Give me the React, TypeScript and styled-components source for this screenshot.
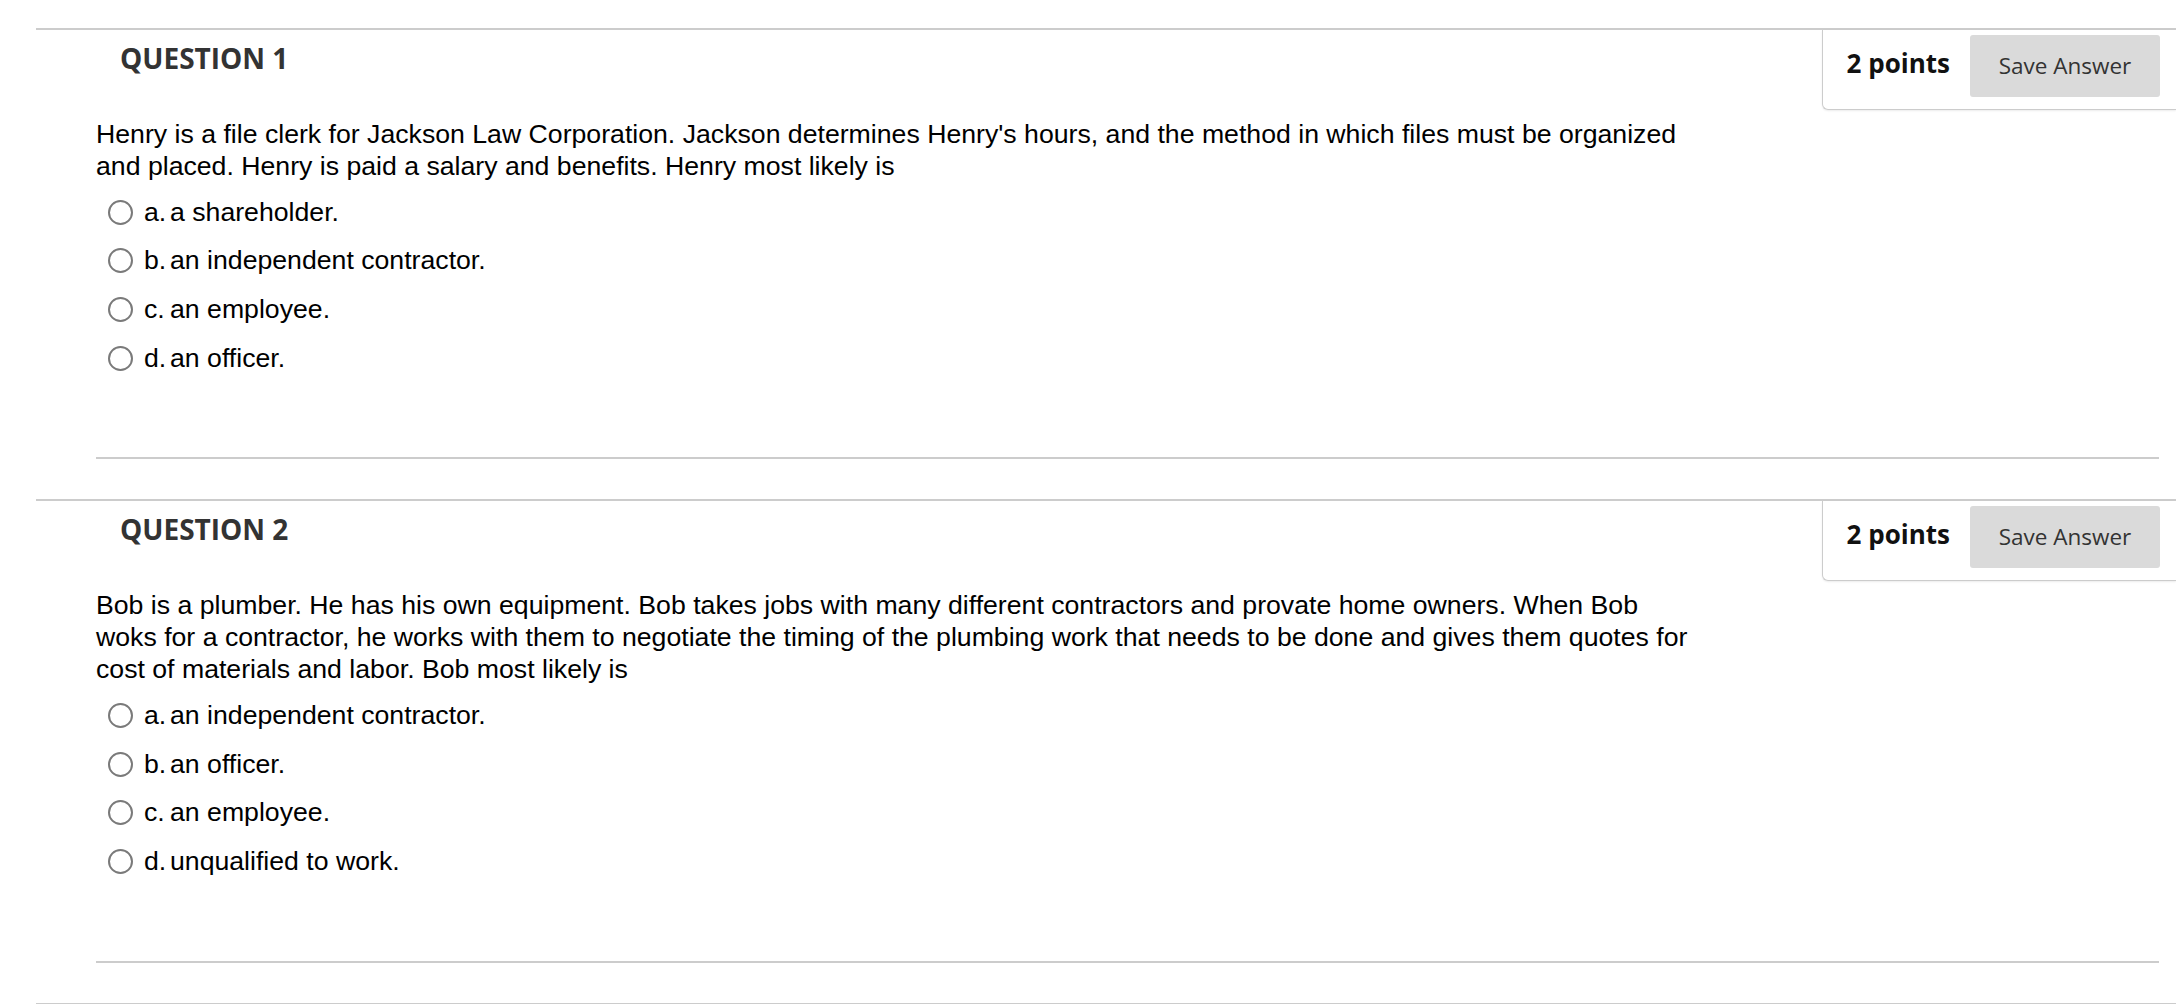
import styled, { createGlobalStyle } from "styled-components";

interface Question {
  number: number;
  points: number;
  text: string;
  options: { letter: string; text: string }[];
}

const questions: Question[] = [
  {
    number: 1,
    points: 2,
    text: "Henry is a file clerk for Jackson Law Corporation. Jackson determines Henry's hours, and the method in which files must be organized and placed. Henry is paid a salary and benefits. Henry most likely is",
    options: [
      { letter: "a.", text: "a shareholder." },
      { letter: "b.", text: "an independent contractor." },
      { letter: "c.", text: "an employee." },
      { letter: "d.", text: "an officer." },
    ],
  },
  {
    number: 2,
    points: 2,
    text: "Bob is a plumber. He has his own equipment. Bob takes jobs with many different contractors and provate home owners. When Bob woks for a contractor, he works with them to negotiate the timing of the plumbing work that needs to be done and gives them quotes for cost of materials and labor. Bob most likely is",
    options: [
      { letter: "a.", text: "an independent contractor." },
      { letter: "b.", text: "an officer." },
      { letter: "c.", text: "an employee." },
      { letter: "d.", text: "unqualified to work." },
    ],
  },
];

const GlobalStyle = createGlobalStyle`
  html, body {
    margin: 0;
    padding: 0;
    background: #ffffff;
  }
  body {
    font-family: "Liberation Sans", Arial, sans-serif;
    overflow: hidden;
  }
`;

const Page = styled.div`
  padding: 28px 0 0 36px;
`;

const QuestionBlock = styled.section`
  border-top: 2px solid #cccccc;
  margin-bottom: 40px;
`;

// top edge of the following question, cut off by the window
const NextQuestion = styled.div`
  border-top: 2px solid #cccccc;
  height: 40px;
`;

const Header = styled.div`
  display: flex;
  justify-content: space-between;
  align-items: flex-start;
  padding-left: 84px;
`;

const Heading = styled.h2`
  margin: 9px 0 0;
  font-family: "Open Sans", sans-serif;
  font-weight: 700;
  font-size: 28px;
  color: #333333;
`;

const PointsBox = styled.div`
  display: flex;
  align-items: center;
  gap: 20px;
  height: 80px;
  box-sizing: border-box;
  padding: 5px 16px 13px 24px;
  border-left: 1px solid #cccccc;
  border-bottom: 1px solid #cccccc;
  border-bottom-left-radius: 6px;
  box-shadow: 0 1px 2px rgba(0, 0, 0, 0.08);
`;

const Points = styled.span`
  font-family: "Open Sans", sans-serif;
  font-weight: 700;
  font-size: 26px;
  color: #111111;
  margin-bottom: 5px;
`;

const SaveButton = styled.button`
  width: 190px;
  height: 62px;
  border: none;
  border-radius: 3px;
  background: #dadada;
  font-family: "Open Sans", sans-serif;
  font-size: 22.5px;
  color: #333333;
  padding: 0;
`;

const Content = styled.div`
  margin: 0 17px 0 60px;
  padding-bottom: 75px;
  border-bottom: 2px solid #cccccc;
`;

const Prompt = styled.p`
  width: 1605px;
  margin: 8px 0 6px;
  font-size: 26.67px;
  line-height: 32px;
  color: #000000;
`;

const OptionList = styled.div`
  display: flex;
  flex-direction: column;
`;

const OptionRow = styled.label`
  display: flex;
  align-items: center;
  height: 48.6px;
  padding-left: 12px;
  font-size: 26.67px;
  color: #000000;
`;

const Radio = styled.span`
  width: 25px;
  height: 25px;
  box-sizing: border-box;
  border: 2px solid #7a7a7a;
  border-radius: 50%;
  background: #ffffff;
  margin-right: 11px;
  flex-shrink: 0;
`;

const Letter = styled.span`
  width: 26px;
`;

const App = () => (
  <Page>
    <GlobalStyle />
    {questions.map((q) => (
      <QuestionBlock key={q.number}>
        <Header>
          <Heading>QUESTION {q.number}</Heading>
          <PointsBox>
            <Points>{q.points} points</Points>
            <SaveButton>Save Answer</SaveButton>
          </PointsBox>
        </Header>
        <Content>
          <Prompt>{q.text}</Prompt>
          <OptionList>
            {q.options.map((o) => (
              <OptionRow key={o.letter}>
                <Radio />
                <Letter>{o.letter}</Letter>
                <span>{o.text}</span>
              </OptionRow>
            ))}
          </OptionList>
        </Content>
      </QuestionBlock>
    ))}
    <NextQuestion />
  </Page>
);

export default App;
